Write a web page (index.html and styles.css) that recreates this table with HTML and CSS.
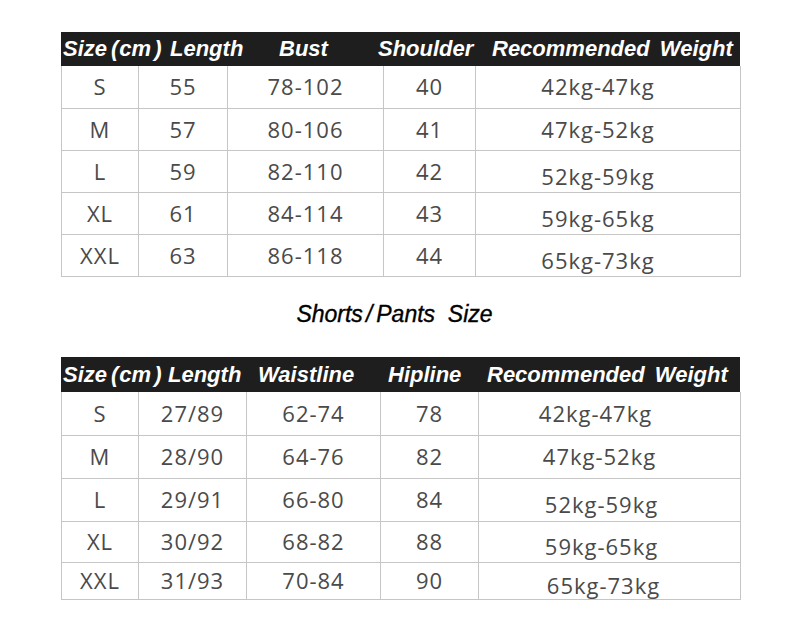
FILE: index.html
```html
<!DOCTYPE html>
<html lang="en">
<head>
<meta charset="utf-8">
<title>Size Chart</title>
<link rel="stylesheet" href="styles.css">
</head>
<body>
<main class="page">
  <section class="chart chart-top">
    <div class="head">
      <span>Size<span class="pl">(</span>cm<span class="pr">)</span></span>
      <span>Length</span>
      <span>Bust</span>
      <span>Shoulder</span>
      <span class="rw">Recommended Weight</span>
    </div>
    <div class="body">
      <div class="cell">S</div><div class="cell">55</div><div class="cell">78-102</div><div class="cell">40</div><div class="cell w">42kg-47kg</div>
      <div class="cell">M</div><div class="cell">57</div><div class="cell">80-106</div><div class="cell">41</div><div class="cell w">47kg-52kg</div>
      <div class="cell">L</div><div class="cell">59</div><div class="cell">82-110</div><div class="cell">42</div><div class="cell w low">52kg-59kg</div>
      <div class="cell">XL</div><div class="cell">61</div><div class="cell">84-114</div><div class="cell">43</div><div class="cell w low">59kg-65kg</div>
      <div class="cell">XXL</div><div class="cell">63</div><div class="cell">86-118</div><div class="cell">44</div><div class="cell w low">65kg-73kg</div>
    </div>
  </section>

  <h2 class="title">Shorts<span class="slash">/</span>Pants&nbsp; Size</h2>

  <section class="chart chart-bottom">
    <div class="head">
      <span>Size<span class="pl">(</span>cm<span class="pr">)</span></span>
      <span>Length</span>
      <span>Waistline</span>
      <span>Hipline</span>
      <span class="rw">Recommended Weight</span>
    </div>
    <div class="body">
      <div class="cell">S</div><div class="cell">27/89</div><div class="cell">62-74</div><div class="cell">78</div><div class="cell w2">42kg-47kg</div>
      <div class="cell">M</div><div class="cell">28/90</div><div class="cell">64-76</div><div class="cell">82</div><div class="cell w2 s1">47kg-52kg</div>
      <div class="cell">L</div><div class="cell">29/91</div><div class="cell">66-80</div><div class="cell">84</div><div class="cell w2 s2 low">52kg-59kg</div>
      <div class="cell">XL</div><div class="cell">30/92</div><div class="cell">68-82</div><div class="cell">88</div><div class="cell w2 s2 low">59kg-65kg</div>
      <div class="cell">XXL</div><div class="cell">31/93</div><div class="cell">70-84</div><div class="cell">90</div><div class="cell w2 s3 low">65kg-73kg</div>
    </div>
  </section>
</main>
</body>
</html>
```

FILE: styles.css
```css
* {
  box-sizing: border-box;
}

html, body {
  margin: 0;
  padding: 0;
  background: #ffffff;
}

.page {
  width: 800px;
  height: 639px;
  padding: 32px 0 0 61px;
  overflow: hidden;
}

.chart {
  width: 679px;
}

.head {
  display: grid;
  align-items: center;
  background: #1e1e1e;
  color: #ffffff;
  font-family: "Liberation Sans", Arial, sans-serif;
  font-style: italic;
  font-weight: bold;
  font-size: 22px;
  padding-left: 2px;
  white-space: nowrap;
}

.head .pl {
  margin-left: 4px;
  margin-right: 1px;
}

.head .pr {
  margin-left: 3px;
}

.head .rw {
  word-spacing: 4px;
}

.chart-top .head {
  height: 34px;
  grid-template-columns: 107px 109px 99px 114px 1fr;
}

.chart-bottom .head {
  height: 35px;
  grid-template-columns: 105px 90px 130px 99px 1fr;
}

.body {
  display: grid;
  border-left: 1px solid #c6c6c6;
}

.chart-top .body {
  grid-template-columns: 77px 89px 156px 92px 265px;
  grid-template-rows: 43px 42px 42px 42px 42px;
}

.chart-bottom .body {
  grid-template-columns: 77px 108px 134px 98px 262px;
  grid-template-rows: 44px 43px 43px 41px 37px;
}

.cell {
  display: flex;
  align-items: center;
  justify-content: center;
  border-right: 1px solid #c6c6c6;
  border-bottom: 1px solid #c6c6c6;
  font-family: "Open Sans", "Noto Sans", sans-serif;
  font-size: 22px;
  letter-spacing: 1px;
  color: #4a4a4a;
  padding-bottom: 2px;
}

.cell.w {
  padding-right: 20px;
}

.cell.w2 {
  padding-right: 28px;
}

.cell.low {
  padding-top: 8px;
  padding-bottom: 0;
}

.cell.w2.s1 {
  padding-right: 20px;
}

.cell.w2.s2 {
  padding-right: 16px;
}

.cell.w2.s3 {
  padding-right: 12px;
}

.title {
  width: 679px;
  margin: 24px 0 30px 0;
  padding-right: 12px;
  text-align: center;
  font-family: "Liberation Sans", Arial, sans-serif;
  font-style: italic;
  font-weight: normal;
  font-size: 23px;
  line-height: 26px;
  color: #000000;
  -webkit-text-stroke: 0.35px #000000;
}

.title .slash {
  margin: 0 4px 0 3px;
}
```
